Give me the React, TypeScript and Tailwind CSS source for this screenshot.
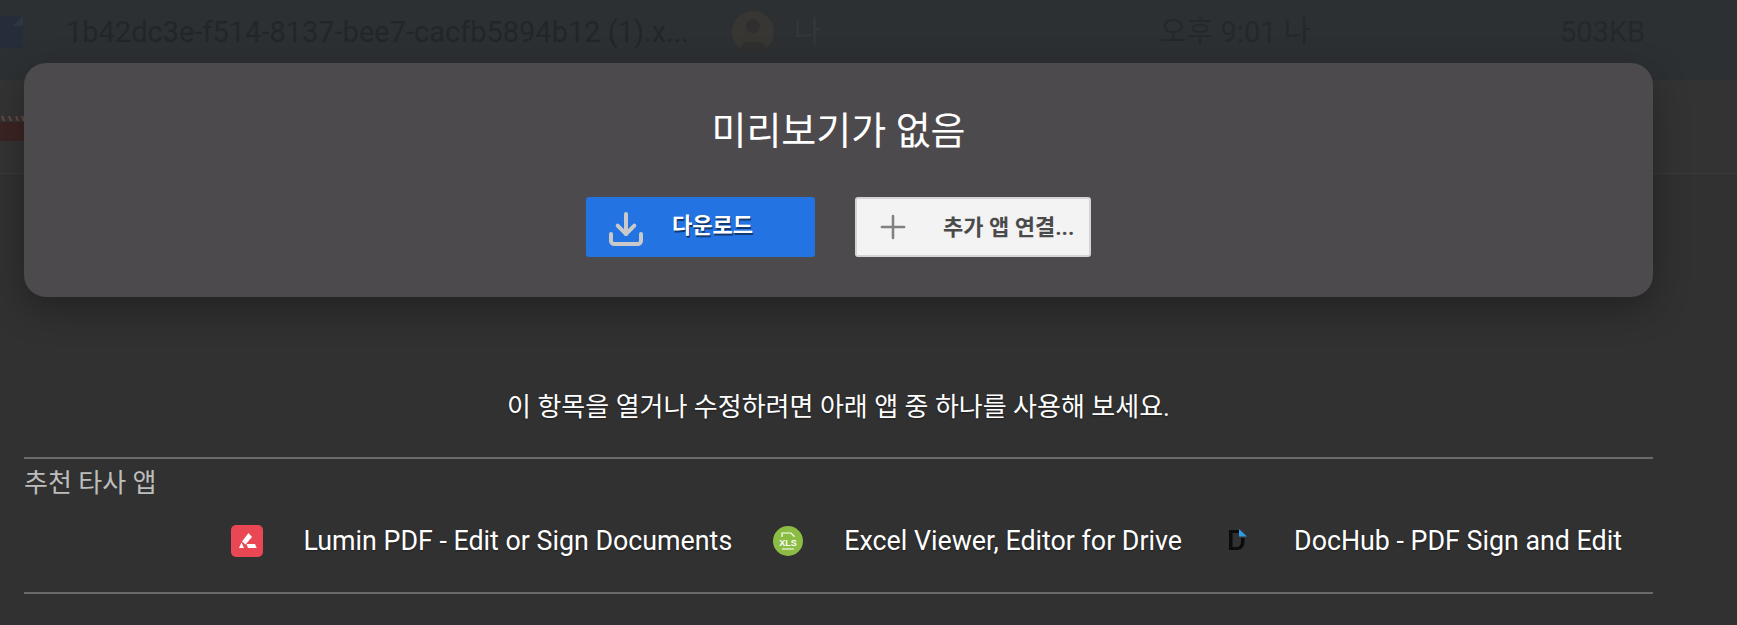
import { Download, Plus } from 'lucide-react'

const apps = [
  { name: 'Lumin PDF - Edit or Sign Documents', icon: <LuminIcon /> },
  { name: 'Excel Viewer, Editor for Drive', icon: <XlsIcon /> },
  { name: 'DocHub - PDF Sign and Edit', icon: <DocHubIcon /> },
]

function LuminIcon() {
  return (
    <svg width="32" height="32" viewBox="0 0 32 32">
      <rect width="32" height="32" rx="5" fill="#ea4755" />
      <path d="M17.500 8l3.500 4-6.500 7.500-3.500-3z" fill="#fff" />
      <path d="M8 23l2.500-5.500 2.500 5.500z" fill="#fff" />
      <path d="M15.500 19h8.500l1.700 4h-8.700z" fill="#fff" />
    </svg>
  )
}

function XlsIcon() {
  return (
    <svg width="32" height="32" viewBox="0 0 32 32">
      <circle cx="16" cy="16" r="15" fill="#8bbd45" />
      <path d="M10 12V8h9l3 3v1" fill="none" stroke="#fff" strokeWidth="1.200" />
      <text x="16" y="21" textAnchor="middle" fontSize="9" fontWeight="700" fill="#fff" fontFamily="Liberation Sans, sans-serif">
        XLS
      </text>
      <path d="M10 24h12" stroke="#fff" strokeWidth="1" />
    </svg>
  )
}

function DocHubIcon() {
  return (
    <svg width="32" height="32" viewBox="0 0 32 32">
      <path d="M7 5h10v3h-6.500v14h3.500c3.500 0 5-2 5-6v-3h3.500v3.500c0 6-3.500 8.500-8.500 8.500h-7z" fill="#0c0c0c" />
      <path d="M17 4l8 7.500h-8z" fill="#2f9be6" />
    </svg>
  )
}

function FileRow() {
  return (
    <div className="flex h-20 items-start bg-[#2c3033] pt-4 text-[29px] leading-[32px] text-[#232629]">
      <div className="relative h-8 w-[23px] shrink-0 bg-[#262c39]">
        <div className="absolute right-0 top-0 h-0 w-0 border-b-[10px] border-l-[10px] border-b-[#30363f] border-l-transparent" />
      </div>
      <span className="ml-[43px] w-[666px] shrink-0 whitespace-nowrap">1b42dc3e-f514-8137-bee7-cacfb5894b12 (1).x...</span>
      <div className="relative h-[42px] w-[42px] shrink-0 -translate-y-[5px] overflow-hidden rounded-full bg-[#383633]">
        <div className="absolute left-[14px] top-[8px] h-[14px] w-[14px] rounded-full bg-[#2f2f2f]" />
        <div className="absolute bottom-[-9px] left-[7px] h-5 w-7 rounded-full bg-[#2f2f2f]" />
      </div>
      <span className="ml-[20px] w-[366px] shrink-0 text-[#33373a]">나</span>
      <span className="w-[400px] shrink-0 text-[#24282b]">오후 9:01 나</span>
      <span className="text-[#24282b]">503KB</span>
    </div>
  )
}

function ListRowBehind() {
  return (
    <div className="flex h-[94px] items-start border-b border-[#3a3a3a] bg-[#333333] pt-[36px]">
      <svg width="24" height="25" viewBox="0 0 24 25">
        <rect y="6" width="24" height="19" fill="#3b2423" />
        <path d="M2 0l2 5M9 0l2 5M16 0l2 5M22 0l2 5" stroke="#6b4a48" strokeWidth="2" />
      </svg>
    </div>
  )
}

export default function App() {
  return (
    <div className="relative h-[625px] w-[1737px] overflow-hidden bg-[#313131] font-['Roboto','Noto_Sans_CJK_KR',sans-serif]">
      <FileRow />
      <ListRowBehind />

      <div className="absolute left-6 top-[63px] flex h-[234px] w-[1629px] flex-col items-center rounded-[22px] bg-[#4c4a4c] shadow-[0_12px_36px_rgba(0,0,0,0.3)]">
        <h1 className="mt-[45px] text-[38px] font-normal leading-[46px] text-white">미리보기가 없음</h1>
        <div className="mt-[43px] flex gap-10">
          <button className="flex h-[60px] w-[229px] items-center rounded-[3px] bg-[#2473e3] pl-5 text-white">
            <Download size={40} strokeWidth={2.4} className="translate-y-[2px] text-[#c9c9c9]" />
            <span className="ml-[26px] -translate-y-[2px] text-[22px] font-bold [text-shadow:1px_2px_0_#123a70]">다운로드</span>
          </button>
          <button className="flex h-[60px] w-[236px] items-center rounded-[3px] border-2 border-[#d4d4d4] bg-[#f3f3f3] pl-[17px] text-[#4a4a4a]">
            <Plus size={38} strokeWidth={1.6} className="text-[#808080]" />
            <span className="ml-[31px] whitespace-nowrap text-[22px] font-bold">추가 앱 연결...</span>
          </button>
        </div>
      </div>

      <section className="mx-6 mt-[217px] w-[1629px] text-white">
        <p className="text-center text-[26px] leading-8 [text-shadow:0_1px_2px_rgba(0,0,0,0.4)]">
          이 항목을 열거나 수정하려면 아래 앱 중 하나를 사용해 보세요.
        </p>
        <div className="mt-[34px] border-y-2 border-[#6a6a6a] pb-[35px] pt-[8px]">
          <h2 className="text-[26px] font-normal leading-8 text-[#bdbdbd]">추천 타사 앱</h2>
          <ul className="mt-[26px] flex items-center justify-end gap-10 pr-[31px]">
            {apps.map((app) => (
              <li key={app.name} className="flex items-center gap-10">
                {app.icon}
                <span className="whitespace-nowrap text-[26.8px] leading-8 [text-shadow:0_1px_2px_rgba(0,0,0,0.4)]">{app.name}</span>
              </li>
            ))}
          </ul>
        </div>
      </section>
    </div>
  )
}
